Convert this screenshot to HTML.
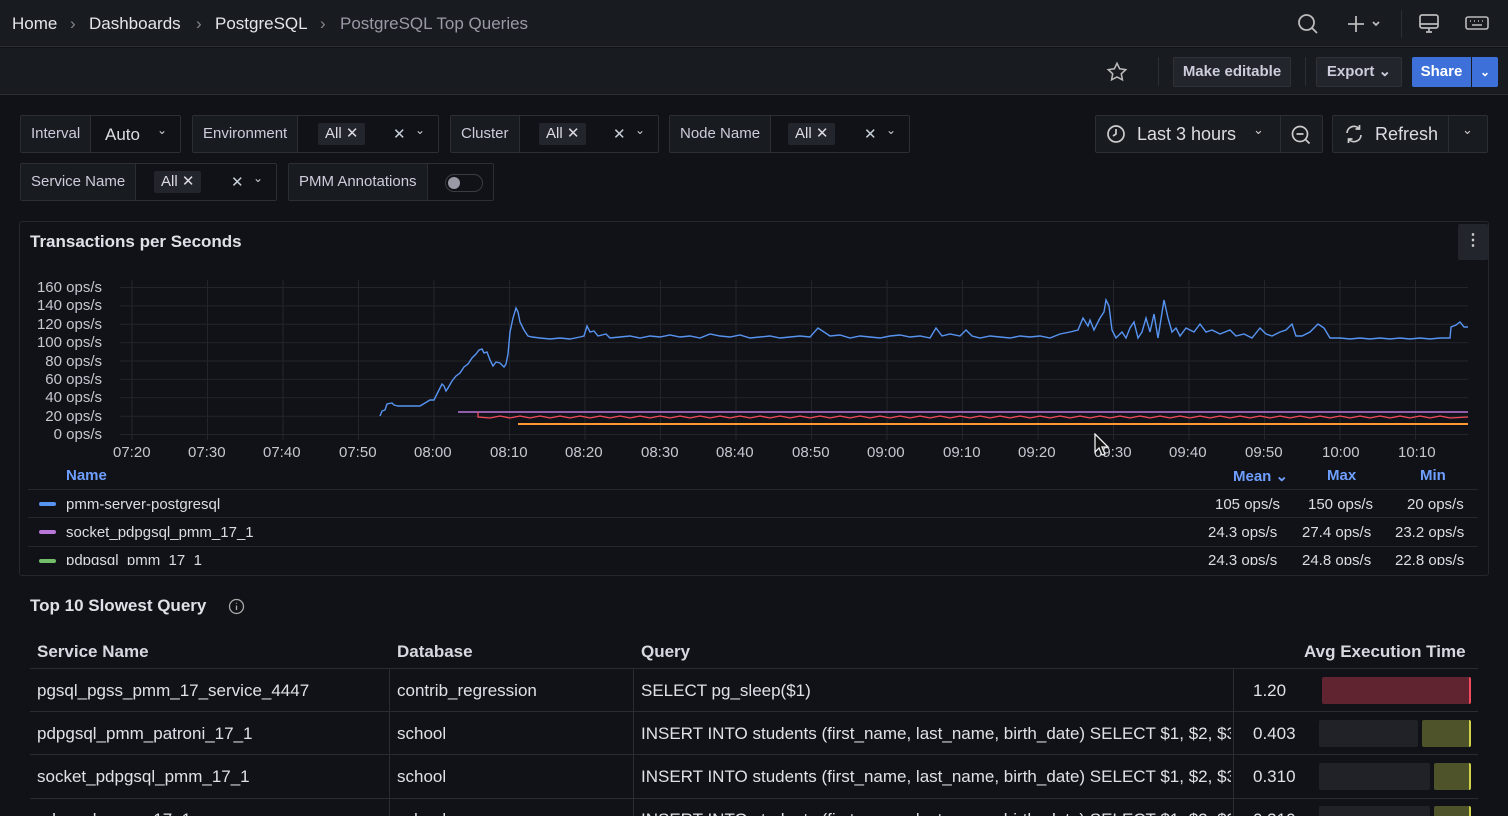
<!DOCTYPE html>
<html style="width:1508px;height:816px;overflow:hidden"><head><meta charset="utf-8"><style>
*{box-sizing:border-box;margin:0;padding:0}
body{width:1508px;height:816px;overflow:hidden;background:#111217;font-family:"Liberation Sans",sans-serif;color:#ccccdc;position:relative}
.a{position:absolute}
.top{left:0;top:0;width:1508px;height:47px;background:#181b1f;border-bottom:1px solid #2c2e33}
.tb{left:0;top:48px;width:1508px;height:47px;background:#181b1f;border-bottom:1px solid #2c2e33}
.bc{top:14px;font-size:17px;color:#e4e4ec}
.box{border:1px solid #2c2e33;border-radius:2px;height:38px;background:#111217}
.lbl{background:#181b1f;border-right:1px solid #2c2e33;height:36px;line-height:36px;padding:0 10px;font-size:15px;color:#ccccdc;position:absolute;top:0;left:0}
.chip{background:#22252b;border-radius:2px;height:22px;line-height:22px;padding:0 7px;font-size:15px;color:#dcdce4;position:absolute;top:7px}
.t{font-size:15px;color:#c7d0d9;position:absolute}
.btn{background:#22252b;border:1px solid #2f3137;border-radius:2px;height:30px;line-height:28px;font-size:15px;font-weight:bold;color:#ccccdc;text-align:center}
.ax{font-size:15px;color:#c7c7d0;position:absolute}
.lg{font-size:15px;color:#dcdce4;position:absolute}
.th{font-size:17px;font-weight:bold;color:#d8d8e0;position:absolute}
.td{font-size:17px;color:#e0e0e8;position:absolute}
.hl{position:absolute;height:1px;background:#25272c}
</style></head><body>
<div class="a top"></div>
<div class="a bc" style="left:12px">Home</div>
<div class="a bc" style="left:70px;color:#888">›</div>
<div class="a bc" style="left:89px">Dashboards</div>
<div class="a bc" style="left:196px;color:#888">›</div>
<div class="a bc" style="left:215px">PostgreSQL</div>
<div class="a bc" style="left:320px;color:#888">›</div>
<div class="a bc" style="left:340px;color:#9a9aa6">PostgreSQL Top Queries</div>
<svg class="a" style="left:1296px;top:12px" width="24" height="24" viewBox="0 0 24 24" fill="none" stroke="#bbb" stroke-width="1.8"><circle cx="10.5" cy="10.5" r="7.5"/><path d="M16 16l5 5"/></svg>
<svg class="a" style="left:1346px;top:14px" width="40" height="20" viewBox="0 0 40 20" fill="none" stroke="#bbb" stroke-width="1.8"><path d="M10 2v16M2 10h16M27 8l3 3 3-3"/></svg>
<div class="a" style="left:1401px;top:10px;width:1px;height:28px;background:#2c2e33"></div>
<svg class="a" style="left:1418px;top:13px" width="22" height="22" viewBox="0 0 22 22" fill="none" stroke="#bbb" stroke-width="1.7"><rect x="2" y="2" width="18" height="13" rx="2"/><path d="M2 11h18M8 19h6M11 15v4"/></svg>
<svg class="a" style="left:1465px;top:15px" width="24" height="16" viewBox="0 0 24 16" fill="none" stroke="#bbb" stroke-width="1.6"><rect x="1" y="2" width="22" height="12" rx="2"/><path d="M5 6h1M9 6h1M13 6h1M17 6h1M7 10h10"/></svg>

<div class="a tb"></div>
<svg class="a" style="left:1106px;top:61px" width="22" height="22" viewBox="0 0 24 24" fill="none" stroke="#bbb" stroke-width="1.7"><path d="M12 2.5l2.9 6 6.6.9-4.8 4.6 1.2 6.5L12 17.4 6.1 20.5l1.2-6.5L2.5 9.4l6.6-.9z"/></svg>
<div class="a" style="left:1158px;top:57px;width:1px;height:29px;background:#2c2e33"></div>
<div class="a btn" style="left:1173px;top:57px;width:118px">Make editable</div>
<div class="a" style="left:1305px;top:57px;width:1px;height:29px;background:#2c2e33"></div>
<div class="a btn" style="left:1316px;top:57px;width:86px">Export ⌄</div>
<div class="a btn" style="left:1412px;top:57px;width:59px;background:#3d71d9;border-color:#3d71d9;color:#fff;border-radius:2px 0 0 2px">Share</div>
<div class="a btn" style="left:1472px;top:57px;width:26px;background:#3d71d9;border-color:#3d71d9;color:#fff;border-radius:0 2px 2px 0;font-size:12px">⌄</div>

<div class="a box" style="left:20px;top:115px;width:161px"><div class="lbl">Interval</div><span class="t" style="left:84px;top:9px;font-size:17px;color:#dcdce4">Auto</span><span class="t" style="left:136px;top:7px;font-size:12px">⌄</span></div>
<div class="a box" style="left:192px;top:115px;width:247px"><div class="lbl">Environment</div><div class="chip" style="left:125px">All ✕</div><span class="t" style="left:200px;top:9px">✕</span><span class="t" style="left:222px;top:7px;font-size:12px">⌄</span></div>
<div class="a box" style="left:450px;top:115px;width:209px"><div class="lbl">Cluster</div><div class="chip" style="left:88px">All ✕</div><span class="t" style="left:162px;top:9px">✕</span><span class="t" style="left:184px;top:7px;font-size:12px">⌄</span></div>
<div class="a box" style="left:669px;top:115px;width:241px"><div class="lbl">Node Name</div><div class="chip" style="left:118px">All ✕</div><span class="t" style="left:194px;top:9px">✕</span><span class="t" style="left:216px;top:7px;font-size:12px">⌄</span></div>
<div class="a box" style="left:20px;top:163px;width:257px"><div class="lbl">Service Name</div><div class="chip" style="left:133px">All ✕</div><span class="t" style="left:210px;top:9px">✕</span><span class="t" style="left:232px;top:7px;font-size:12px">⌄</span></div>
<div class="a box" style="left:288px;top:163px;width:206px"><div class="lbl">PMM Annotations</div><div class="a" style="left:156px;top:10px;width:38px;height:18px;border:1px solid #3a3c42;border-radius:9px"><div class="a" style="left:2px;top:2px;width:12px;height:12px;border-radius:6px;background:#9a9aa6"></div></div></div>

<div class="a box" style="left:1095px;top:115px;width:228px;background:#181b1f"></div>
<svg class="a" style="left:1106px;top:124px" width="20" height="20" viewBox="0 0 20 20" fill="none" stroke="#ccc" stroke-width="1.7"><circle cx="10" cy="10" r="8"/><path d="M10 5v5l-3 2"/></svg>
<div class="a" style="left:1137px;top:124px;font-size:18px;color:#dcdce4">Last 3 hours</div>
<div class="a" style="left:1253px;top:122px;font-size:13px;color:#ccc">⌄</div>
<div class="a" style="left:1280px;top:116px;width:1px;height:36px;background:#2c2e33"></div>
<svg class="a" style="left:1290px;top:124px" width="22" height="22" viewBox="0 0 22 22" fill="none" stroke="#ccc" stroke-width="1.7"><circle cx="10" cy="10" r="7.5"/><path d="M6.5 10h7M15.5 15.5l4 4"/></svg>
<div class="a box" style="left:1332px;top:115px;width:156px;background:#181b1f"></div>
<svg class="a" style="left:1344px;top:124px" width="20" height="20" viewBox="0 0 20 20" fill="none" stroke="#ccc" stroke-width="1.7"><path d="M3 9a7 7 0 0 1 12.5-4M17 11a7 7 0 0 1-12.5 4M15.5 1v4h-4M4.5 19v-4h4"/></svg>
<div class="a" style="left:1375px;top:124px;font-size:18px;color:#dcdce4">Refresh</div>
<div class="a" style="left:1448px;top:116px;width:1px;height:36px;background:#2c2e33"></div>
<div class="a" style="left:1462px;top:122px;font-size:13px;color:#ccc">⌄</div>

<div class="a" style="left:19px;top:221px;width:1470px;height:355px;border:1px solid #25272c;border-radius:3px;background:#111217"></div>
<div class="a" style="left:30px;top:232px;font-size:17px;font-weight:bold;color:#e0e0e8">Transactions per Seconds</div>
<div class="a" style="left:1458px;top:224px;width:30px;height:36px;background:#22252b;border-radius:2px;color:#ccc;text-align:center;line-height:34px;font-size:16px;font-weight:bold">⋮</div>

<svg class="a" style="left:0;top:270px" width="1508" height="175">
<g stroke="#23252a" stroke-width="1">
<path d="M120 17.5H1468M120 35.9H1468M120 54.3H1468M120 72.6H1468M120 91H1468M120 109.4H1468M120 127.8H1468M120 146.2H1468M120 164.5H1468"/>
<path d="M132 10V170M207.5 10V170M283 10V170M358.5 10V170M434 10V170M509.5 10V170M585 10V170M660.5 10V170M736 10V170M811.5 10V170M887 10V170M962.5 10V170M1038 10V170M1113.5 10V170M1189 10V170M1264.5 10V170M1340 10V170M1415.5 10V170"/>
</g>
<path d="M458 142H1468" stroke="#b877d9" stroke-width="1.5"/>
<path d="M478 142V147 L490 148 L500 146 L510 148 L520 146 L530 148 L540 146 L550 148 L560 146 L570 148 L580 146 L590 148 L600 146 L610 148 L620 146 L630 148 L640 146 L650 148 L660 146 L670 148 L680 146 L690 148 L700 146 L710 148 L720 146 L730 148 L740 146 L750 148 L760 146 L770 148 L780 146 L790 148 L800 146 L810 148 L820 146 L830 148 L840 146 L850 148 L860 146 L870 148 L880 146 L890 148 L900 146 L910 148 L920 146 L930 148 L940 146 L950 148 L960 146 L970 148 L980 146 L990 148 L1000 146 L1010 148 L1020 146 L1030 148 L1040 146 L1050 148 L1060 146 L1070 148 L1080 146 L1090 148 L1100 146 L1110 148 L1120 146 L1130 148 L1140 146 L1150 148 L1160 146 L1170 148 L1180 146 L1190 148 L1200 146 L1210 148 L1220 146 L1230 148 L1240 146 L1250 148 L1260 146 L1270 148 L1280 146 L1290 148 L1300 146 L1310 148 L1320 146 L1330 148 L1340 146 L1350 148 L1360 146 L1370 148 L1380 146 L1390 148 L1400 146 L1410 148 L1420 146 L1430 148 L1440 146 L1450 148 L1468 147" stroke="#f2495c" stroke-width="1.3" fill="none"/>
<path d="M518 154H1468" stroke="#ff9830" stroke-width="2"/>
<path fill="none" stroke="#5794f2" stroke-width="1.4" d="M380 146 L382 141 L385 140 L387 134 L392 133 L394 135 L398 136 L420 136 L425 133 L430 130 L434 130 L437 124 L440 118 L442 114 L444 116 L446 121 L448 118 L452 111 L456 106 L460 103 L464 97 L468 94 L472 88 L476 84 L479 80 L482 79 L484 83 L487 82 L490 90 L493 96 L496 92 L500 93 L504 97 L506 94 L508 84 L510 62 L513 48 L516 38 L518 42 L520 52 L524 60 L528 66 L532 67 L540 68 L550 69 L560 68 L570 69 L580 67 L584 66 L587 56 L590 62 L594 61 L598 66 L606 64 L610 68 L620 67 L630 66 L640 68 L650 66 L660 67 L670 65 L680 67 L690 66 L700 68 L710 64 L720 66 L730 67 L740 65 L750 68 L760 67 L770 66 L780 68 L790 67 L800 66 L810 67 L818 58 L824 62 L830 66 L840 65 L850 68 L860 66 L870 67 L880 68 L890 66 L900 65 L910 67 L920 66 L930 68 L936 58 L942 66 L950 64 L960 66 L966 60 L972 66 L980 68 L990 66 L1000 67 L1010 68 L1020 66 L1030 67 L1040 66 L1050 68 L1060 64 L1070 62 L1078 60 L1083 48 L1088 56 L1090 50 L1094 60 L1100 48 L1104 42 L1106 30 L1109 36 L1112 60 L1116 68 L1122 62 L1126 68 L1130 58 L1134 52 L1138 68 L1142 62 L1146 48 L1150 62 L1154 44 L1158 68 L1164 30 L1168 48 L1172 62 L1176 58 L1180 66 L1186 58 L1194 62 L1200 54 L1206 62 L1212 60 L1220 64 L1230 60 L1236 66 L1244 64 L1252 68 L1260 58 L1266 64 L1272 66 L1280 62 L1286 60 L1292 54 L1296 66 L1302 66 L1310 62 L1318 54 L1324 58 L1330 68 L1340 68 L1350 69 L1360 68 L1370 69 L1380 68 L1390 69 L1400 68 L1410 69 L1420 68 L1430 69 L1440 68 L1450 68 L1451 57 L1456 55 L1460 52 L1464 57 L1468 57"/>
</svg>
<div class="ax" style="left:34px;top:279px;line-height:18.4px;text-align:right;width:68px">160 ops/s<br>140 ops/s<br>120 ops/s<br>100 ops/s<br>80 ops/s<br>60 ops/s<br>40 ops/s<br>20 ops/s<br>0 ops/s</div>
<div class="ax" style="left:113px;top:444px">07:20</div>
<div class="ax" style="left:188px;top:444px">07:30</div>
<div class="ax" style="left:263px;top:444px">07:40</div>
<div class="ax" style="left:339px;top:444px">07:50</div>
<div class="ax" style="left:414px;top:444px">08:00</div>
<div class="ax" style="left:490px;top:444px">08:10</div>
<div class="ax" style="left:565px;top:444px">08:20</div>
<div class="ax" style="left:641px;top:444px">08:30</div>
<div class="ax" style="left:716px;top:444px">08:40</div>
<div class="ax" style="left:792px;top:444px">08:50</div>
<div class="ax" style="left:867px;top:444px">09:00</div>
<div class="ax" style="left:943px;top:444px">09:10</div>
<div class="ax" style="left:1018px;top:444px">09:20</div>
<div class="ax" style="left:1094px;top:444px">09:30</div>
<div class="ax" style="left:1169px;top:444px">09:40</div>
<div class="ax" style="left:1245px;top:444px">09:50</div>
<div class="ax" style="left:1322px;top:444px">10:00</div>
<div class="ax" style="left:1398px;top:444px">10:10</div>
<div class="lg" style="left:66px;top:467px;color:#6e9fff;font-weight:bold">Name</div>
<div class="lg" style="left:1233px;top:467px;color:#6e9fff;font-weight:bold">Mean ⌄</div>
<div class="lg" style="left:1327px;top:467px;color:#6e9fff;font-weight:bold">Max</div>
<div class="lg" style="left:1420px;top:467px;color:#6e9fff;font-weight:bold">Min</div>
<div class="hl" style="left:28px;top:489px;width:1450px"></div>
<div class="hl" style="left:28px;top:517px;width:1450px"></div>
<div class="hl" style="left:28px;top:546px;width:1450px"></div>
<div class="a" style="left:39px;top:502px;width:17px;height:4px;border-radius:2px;background:#5794f2"></div>
<div class="a" style="left:39px;top:530px;width:17px;height:4px;border-radius:2px;background:#b877d9"></div>
<div class="a" style="left:39px;top:559px;width:17px;height:4px;border-radius:2px;background:#73bf69"></div>
<div class="lg" style="left:66px;top:496px">pmm-server-postgresql</div>
<div class="lg" style="left:66px;top:524px">socket_pdpgsql_pmm_17_1</div>
<div style="position:absolute;left:0;top:550px;width:1480px;height:15px;overflow:hidden">
<div class="lg" style="left:66px;top:2px">pdpgsql_pmm_17_1</div>
<div class="lg" style="left:1208px;top:2px">24.3 ops/s</div>
<div class="lg" style="left:1302px;top:2px">24.8 ops/s</div>
<div class="lg" style="left:1395px;top:2px">22.8 ops/s</div>
</div>
<div class="lg" style="left:1215px;top:496px">105 ops/s</div>
<div class="lg" style="left:1308px;top:496px">150 ops/s</div>
<div class="lg" style="left:1407px;top:496px">20 ops/s</div>
<div class="lg" style="left:1208px;top:524px">24.3 ops/s</div>
<div class="lg" style="left:1302px;top:524px">27.4 ops/s</div>
<div class="lg" style="left:1395px;top:524px">23.2 ops/s</div>

<div class="a" style="left:30px;top:596px;font-size:17px;font-weight:bold;color:#e0e0e8">Top 10 Slowest Query</div>
<svg class="a" style="left:228px;top:598px" width="17" height="17" viewBox="0 0 17 17" fill="none" stroke="#aaa" stroke-width="1.3"><circle cx="8.5" cy="8.5" r="7"/><path d="M8.5 7.5v4.5M8.5 4.8v.8"/></svg>
<div class="a" style="left:0;top:600px;width:1508px;height:216px;overflow:hidden">
<div class="th" style="left:37px;top:42px">Service Name</div>
<div class="th" style="left:397px;top:42px">Database</div>
<div class="th" style="left:641px;top:42px">Query</div>
<div class="th" style="left:1304px;top:42px">Avg Execution Time</div>
<div class="hl" style="left:30px;top:68px;width:1448px;background:#2a2c31"></div>
<div class="hl" style="left:30px;top:111px;width:1448px;background:#2a2c31"></div>
<div class="hl" style="left:30px;top:154px;width:1448px;background:#2a2c31"></div>
<div class="hl" style="left:30px;top:198px;width:1448px;background:#2a2c31"></div>
<div class="a" style="left:389px;top:69px;width:1px;height:147px;background:#2a2c31"></div>
<div class="a" style="left:633px;top:69px;width:1px;height:147px;background:#2a2c31"></div>
<div class="a" style="left:1233px;top:69px;width:1px;height:147px;background:#2a2c31"></div>
<div class="td" style="left:37px;top:81px">pgsql_pgss_pmm_17_service_4447</div>
<div class="td" style="left:397px;top:81px">contrib_regression</div>
<div class="td" style="left:641px;top:81px">SELECT pg_sleep($1)</div>
<div class="td" style="left:1253px;top:81px">1.20</div>
<div class="td" style="left:37px;top:124px">pdpgsql_pmm_patroni_17_1</div>
<div class="td" style="left:397px;top:124px">school</div>
<div class="td" style="left:641px;top:124px;width:590px;overflow:hidden;white-space:nowrap">INSERT INTO students (first_name, last_name, birth_date) SELECT $1, $2, $3</div>
<div class="td" style="left:1253px;top:124px">0.403</div>
<div class="td" style="left:37px;top:167px">socket_pdpgsql_pmm_17_1</div>
<div class="td" style="left:397px;top:167px">school</div>
<div class="td" style="left:641px;top:167px;width:590px;overflow:hidden;white-space:nowrap">INSERT INTO students (first_name, last_name, birth_date) SELECT $1, $2, $3</div>
<div class="td" style="left:1253px;top:167px">0.310</div>
<div class="a" style="left:1322px;top:77px;width:149px;height:27px;background:#5f2430;border-radius:2px;border-right:2px solid #f2495c"></div>
<div class="a" style="left:1319px;top:120px;width:99px;height:27px;background:#202227;border-radius:2px"></div>
<div class="a" style="left:1422px;top:120px;width:49px;height:27px;background:#4f5329;border-radius:2px;border-right:2px solid #cfd246"></div>
<div class="a" style="left:1319px;top:163px;width:111px;height:27px;background:#202227;border-radius:2px"></div>
<div class="a" style="left:1434px;top:163px;width:37px;height:27px;background:#4f5329;border-radius:2px;border-right:2px solid #cfd246"></div>
<div class="a" style="left:1319px;top:206px;width:111px;height:27px;background:#202227;border-radius:2px"></div>
<div class="a" style="left:1434px;top:206px;width:37px;height:27px;background:#4f5329;border-radius:2px;border-right:2px solid #cfd246"></div>
<div class="td" style="left:37px;top:210px">pdpgsql_pmm_17_1</div>
<div class="td" style="left:397px;top:210px">school</div>
<div class="td" style="left:641px;top:210px;width:590px;overflow:hidden;white-space:nowrap">INSERT INTO students (first_name, last_name, birth_date) SELECT $1, $2, $3</div>
<div class="td" style="left:1253px;top:210px">0.310</div>
</div>
<svg class="a" style="left:1094px;top:433px" width="16" height="24" viewBox="0 0 16 24"><path d="M1 1v18l4-4 3 7 3-1-3-7h6z" fill="#111" stroke="#eee" stroke-width="1.3"/></svg>
</body></html>
